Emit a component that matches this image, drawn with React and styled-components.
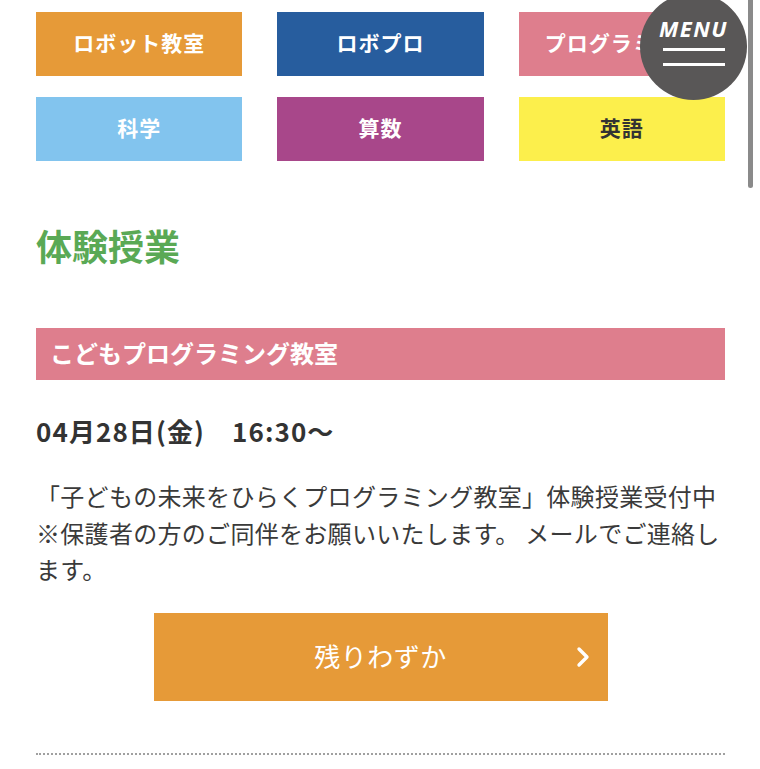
import styled, { createGlobalStyle } from 'styled-components';

const GlobalStyle = createGlobalStyle`
  body {
    margin: 0;
    background: #fff;
    font-family: "Noto Sans CJK JP", "Noto Sans", sans-serif;
    color: #333;
  }
  * { box-sizing: border-box; }
`;

const courses = [
  { label: 'ロボット教室', bg: '#e69a38', fg: '#fff' },
  { label: 'ロボプロ', bg: '#275d9e', fg: '#fff' },
  { label: 'プログラミング', bg: '#de7e8d', fg: '#fff' },
  { label: '科学', bg: '#82c4ee', fg: '#fff' },
  { label: '算数', bg: '#a8478a', fg: '#fff' },
  { label: '英語', bg: '#fcef4c', fg: '#333' },
];

const Page = styled.main`
  padding: 12px 35px 40px 36px;
`;

const CourseNav = styled.nav`
  display: grid;
  grid-template-columns: repeat(3, 1fr);
  column-gap: 35px;
  row-gap: 21px;
`;

const CourseLink = styled.a`
  display: flex;
  align-items: center;
  justify-content: center;
  height: 64px;
  padding-bottom: 5px;
  background: ${p => p.$bg};
  color: ${p => p.$fg};
  font-size: 21px;
  font-weight: 700;
  letter-spacing: 1px;
  text-decoration: none;
  white-space: nowrap;
  overflow: hidden;
`;

const Heading = styled.h2`
  margin: 57px 0 0;
  font-size: 36px;
  line-height: 54px;
  font-weight: 700;
  color: #5aa955;
`;

const ClassBar = styled.h3`
  margin: 56px 0 0;
  height: 52px;
  display: flex;
  align-items: center;
  padding: 0 0 3px 14px;
  background: #de7e8d;
  color: #fff;
  font-size: 24px;
  font-weight: 700;
`;

const DateLine = styled.p`
  margin: 33px 0 0;
  font-size: 26px;
  line-height: 36px;
  font-weight: 700;
  letter-spacing: 1.1px;
  color: #333;
`;

const Body = styled.p`
  margin: 29px 0 0;
  font-size: 24px;
  line-height: 36.5px;
  letter-spacing: 0.3px;
  color: #3a3a3a;
`;

const ActionButton = styled.a`
  position: relative;
  display: flex;
  align-items: center;
  justify-content: center;
  width: 454px;
  height: 88px;
  margin: 25px auto 0;
  padding-bottom: 3px;
  background: #e69a38;
  color: #fff;
  font-size: 26px;
  letter-spacing: 0.5px;
  text-decoration: none;
`;

const Chevron = styled.svg`
  position: absolute;
  right: 15px;
  top: 50%;
  transform: translateY(-50%);
`;

const Divider = styled.hr`
  margin: 52px 0 0;
  border: 0;
  border-top: 2px dotted #a0a0a0;
`;

const MenuButton = styled.button`
  position: fixed;
  top: -7px;
  right: 13px;
  width: 107px;
  height: 107px;
  border: 0;
  border-radius: 50%;
  background: #595757;
  display: flex;
  flex-direction: column;
  align-items: center;
  padding: 22px 0 0;
  cursor: pointer;
`;

const MenuLabel = styled.span`
  font-family: "Noto Sans", "Open Sans", sans-serif;
  font-style: italic;
  font-weight: 700;
  font-size: 22px;
  line-height: 26px;
  letter-spacing: 1.5px;
  color: #fff;
`;

const MenuBar = styled.span`
  display: block;
  width: 62px;
  height: 3px;
  background: #fff;
  margin-top: ${p => p.$gap}px;
`;

const ScrollThumb = styled.div`
  position: fixed;
  top: 0;
  right: 7px;
  width: 5px;
  height: 188px;
  border-radius: 0 0 3px 3px;
  background: #8a8a8a;
`;

export default function App() {
  return (
    <>
      <GlobalStyle />
      <Page>
        <CourseNav>
          {courses.map(c => (
            <CourseLink key={c.label} href="#" $bg={c.bg} $fg={c.fg}>
              {c.label}
            </CourseLink>
          ))}
        </CourseNav>

        <Heading>体験授業</Heading>
        <ClassBar>こどもプログラミング教室</ClassBar>
        <DateLine>04月28日(金)　16:30〜</DateLine>
        <Body>
          「子どもの未来をひらくプログラミング教室」体験授業受付中
          <br />
          ※保護者の方のご同伴をお願いいたします。 メールでご連絡します。
        </Body>

        <ActionButton href="#">
          残りわずか
          <Chevron width="20" height="24" viewBox="0 0 20 24">
            <polyline
              points="6,4 14,12 6,20"
              fill="none"
              stroke="#fff"
              strokeWidth="3.4"
              strokeLinecap="round"
              strokeLinejoin="round"
            />
          </Chevron>
        </ActionButton>

        <Divider />
      </Page>

      <MenuButton aria-label="menu">
        <MenuLabel>MENU</MenuLabel>
        <MenuBar $gap={7} />
        <MenuBar $gap={12} />
      </MenuButton>
      <ScrollThumb />
    </>
  );
}
